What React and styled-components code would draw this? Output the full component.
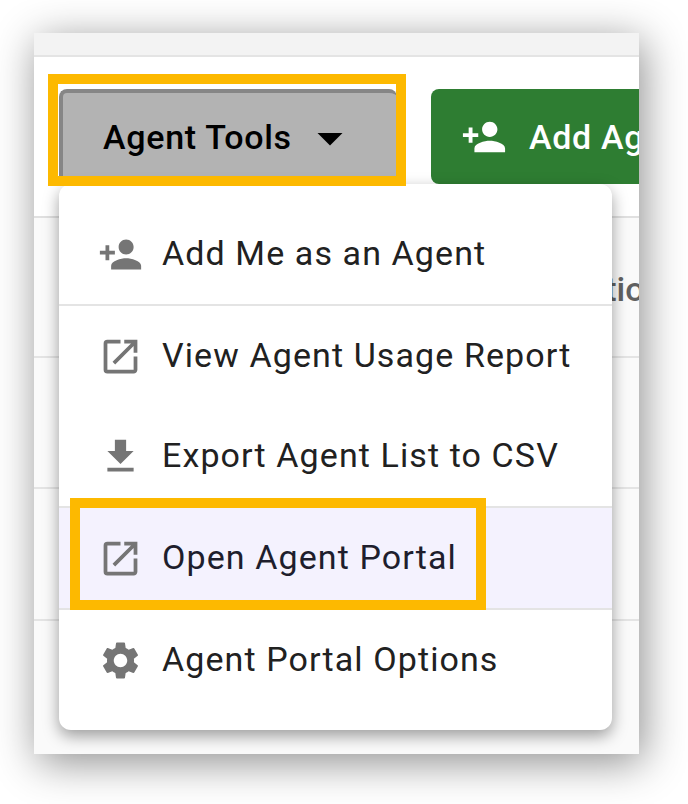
import React from "react";
import styled, { createGlobalStyle } from "styled-components";
import { MdPersonAdd, MdOpenInNew, MdFileDownload, MdSettings, MdArrowDropDown } from "react-icons/md";

const GlobalStyle = createGlobalStyle`
  html, body {
    margin: 0;
    padding: 0;
    background: #fff;
    font-family: Roboto, "Liberation Sans", sans-serif;
  }
`;

function App() {
  return (
    <Page>
      <GlobalStyle />
      <Frame>
        <Clip>
          <TopBar />
          <Toolbar>
            <ToolsButton>
              Agent Tools
              <Caret><MdArrowDropDown size={60} /></Caret>
            </ToolsButton>
            <AddButton>
              <MdPersonAdd size={46} />
              Add Agent
            </AddButton>
          </Toolbar>
          <TableRow $height={140}>
            <HeaderCell>Actions</HeaderCell>
          </TableRow>
          <TableRow $height={131} />
          <TableRow $height={132} />
        </Clip>
        <Highlight $top={41} $left={14} $width={358} $height={112} />
        <Menu>
          <MenuItem $height={122} $pad="20px 0 0" $divided>
            <MenuIcon><MdPersonAdd size={45} /></MenuIcon>
            <MenuLabel>Add Me as an Agent</MenuLabel>
          </MenuItem>
          <MenuItem $height={100}>
            <MenuIcon><MdOpenInNew size={45} /></MenuIcon>
            <MenuLabel>View Agent Usage Report</MenuLabel>
          </MenuItem>
          <MenuItem $height={102} $divided>
            <MenuIcon><MdFileDownload size={45} /></MenuIcon>
            <MenuLabel>Export Agent List to CSV</MenuLabel>
          </MenuItem>
          <MenuItem $height={102} $active $divided>
            <MenuIcon><MdOpenInNew size={45} /></MenuIcon>
            <MenuLabel>Open Agent Portal</MenuLabel>
            <Highlight $top={-10} $left={11} $width={416} $height={112} />
          </MenuItem>
          <MenuItem $height={120} $pad="0 0 20px">
            <MenuIcon><MdSettings size={45} /></MenuIcon>
            <MenuLabel>Agent Portal Options</MenuLabel>
          </MenuItem>
        </Menu>
      </Frame>
    </Page>
  );
}

const Page = styled.div`
  width: 688px;
  height: 804px;
  padding: 33px 49px 50px 34px;
  box-sizing: border-box;
  overflow: hidden;
`;

const Frame = styled.div`
  position: relative;
  width: 605px;
  height: 721px;
  background: #fafafa;
  box-shadow: 4px 8px 40px rgba(0, 0, 0, 0.45);
`;

const Clip = styled.div`
  width: 100%;
  height: 100%;
  overflow: hidden;
`;

const TopBar = styled.div`
  height: 22px;
  background: #f3f3f3;
  border-bottom: 2px solid #e4e4e4;
`;

const Toolbar = styled.div`
  display: flex;
  gap: 34px;
  height: 161px;
  padding: 32px 0 0 25px;
  box-sizing: border-box;
  background: #fff;
  border-bottom: 2px solid #e0e0e0;
`;

const ToolsButton = styled.div`
  display: flex;
  align-items: center;
  flex: none;
  width: 338px;
  height: 95px;
  padding: 0 0 4px 40px;
  box-sizing: border-box;
  background: #b3b3b3;
  border-top: 4px solid #868686;
  border-left: 4px solid #868686;
  border-radius: 8px;
  color: #000;
  font-size: 34px;
  font-weight: 500;
  letter-spacing: 0.7px;
`;

const Caret = styled.span`
  display: flex;
  margin-left: 8px;
  margin-top: 2px;
`;

const AddButton = styled.div`
  display: flex;
  align-items: center;
  flex: none;
  gap: 22px;
  height: 95px;
  padding: 0 28px 0 30px;
  background: #2e7d32;
  border-radius: 8px;
  color: #fff;
  font-size: 34px;
  font-weight: 500;
  letter-spacing: 0.7px;
`;

const TableRow = styled.div`
  display: flex;
  align-items: center;
  height: ${(p) => p.$height}px;
  box-sizing: border-box;
  background: #fafafa;
  border-bottom: 2px solid #e4e4e4;
`;

const HeaderCell = styled.span`
  flex: none;
  margin-left: 531px;
  margin-top: 4px;
  color: #616161;
  font-size: 34px;
  font-weight: 500;
  white-space: nowrap;
`;

const Menu = styled.div`
  position: absolute;
  top: 151px;
  left: 25px;
  width: 553px;
  height: 546px;
  background: #fff;
  border-radius: 12px;
  box-shadow: 0 6px 16px rgba(0, 0, 0, 0.38);
`;

const MenuItem = styled.div`
  position: relative;
  display: flex;
  align-items: center;
  gap: 19px;
  height: ${(p) => p.$height}px;
  padding: ${(p) => p.$pad || "0"};
  padding-left: 39px;
  box-sizing: border-box;
  background: ${(p) => (p.$active ? "#f4f2fe" : "transparent")};
  border-bottom: ${(p) => (p.$divided ? "2px solid #e4e4e4" : "none")};
  color: ${(p) => (p.$active ? "#1e1e2d" : "#212121")};
  font-size: 34px;
  letter-spacing: 1.1px;
`;

const MenuLabel = styled.span`
  margin-top: -2px;
`;

const MenuIcon = styled.span`
  display: flex;
  flex: none;
  width: 45px;
  color: #757575;
`;

const Highlight = styled.div`
  position: absolute;
  top: ${(p) => p.$top}px;
  left: ${(p) => p.$left}px;
  width: ${(p) => p.$width}px;
  height: ${(p) => p.$height}px;
  box-sizing: border-box;
  border: 10px solid #fdb900;
  z-index: 2;
`;

export default App;
